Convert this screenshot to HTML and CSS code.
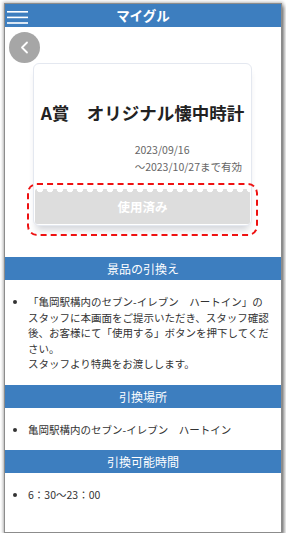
FILE: index.html
```html
<!DOCTYPE html>
<html lang="ja">
<head>
<meta charset="utf-8">
<title>マイグル</title>
<link rel="stylesheet" href="styles.css">
</head>
<body>
<div class="frame">
  <header class="topbar">
    <svg class="menu" width="22" height="17" viewBox="0 0 22 17" aria-hidden="true">
      <rect x="0" y="2" width="21" height="1.6" fill="#fff"/>
      <rect x="0" y="7.6" width="21" height="1.6" fill="#fff"/>
      <rect x="0" y="13.2" width="21" height="1.6" fill="#fff"/>
    </svg>
    <h1 class="title">マイグル</h1>
  </header>

  <div class="back-row">
    <div class="back">
      <svg width="31" height="31" viewBox="0 0 31 31" aria-hidden="true">
        <polyline points="18,10.5 13,15.5 18,20.5" fill="none" stroke="#fff" stroke-width="1.8" stroke-linecap="round" stroke-linejoin="round"/>
      </svg>
    </div>
  </div>

  <div class="card-wrap">
    <div class="card">
      <p class="prize">A賞　オリジナル懐中時計</p>
      <div class="dates-row">
        <div class="dates">2023/09/16<br>～2023/10/27まで有効</div>
      </div>
      <div class="used">使用済み</div>
    </div>
    <div class="highlight"></div>
  </div>

  <section class="sec sec-first">
    <h2 class="sec-head">景品の引換え</h2>
    <ul class="sec-list">
      <li>「亀岡駅構内のセブン-イレブン　ハートイン」のスタッフに本画面をご提示いただき、スタッフ確認後、お客様にて「使用する」ボタンを押下してください。<br>スタッフより特典をお渡しします。</li>
    </ul>
  </section>

  <section class="sec">
    <h2 class="sec-head">引換場所</h2>
    <ul class="sec-list">
      <li>亀岡駅構内のセブン-イレブン　ハートイン</li>
    </ul>
  </section>

  <section class="sec">
    <h2 class="sec-head">引換可能時間</h2>
    <ul class="sec-list">
      <li>6：30～23：00</li>
    </ul>
  </section>
</div>
</body>
</html>
```

FILE: styles.css
```css
* { box-sizing: border-box; }

html, body {
  margin: 0;
  padding: 0;
  background: #ffffff;
}

body {
  font-family: "Noto Sans CJK JP", "Noto Sans", sans-serif;
  color: #333333;
}

.frame {
  margin: 3px 4px 0 4px;
  height: 530px;
  border: 1px solid #8c8c8c;
  background: #ffffff;
  box-shadow: 0 0 3px 1px rgba(0, 0, 0, 0.25), 2px 3px 4px rgba(0, 0, 0, 0.45);
  overflow: hidden;
}

.topbar {
  height: 23px;
  background: #3d7ebf;
  display: flex;
  align-items: center;
  justify-content: center;
  position: relative;
}

.menu {
  position: absolute;
  left: 2px;
  top: 5px;
}

.title {
  margin: 0;
  font-size: 13.5px;
  font-weight: 700;
  color: #ffffff;
  line-height: 23px;
}

.back-row {
  height: 36px;
  padding: 5px 0 0 4px;
}

.back {
  width: 31px;
  height: 31px;
  border-radius: 50%;
  background: #a6a6a6;
}

.back svg { display: block; }

.card-wrap {
  position: relative;
  margin: 0 29px 0 28px;
}

.card {
  border: 1px solid #e4e8f0;
  border-radius: 6px;
  padding: 36px 1px 1px;
  background: #ffffff;
  box-shadow: 0 7px 7px -3px rgba(60, 70, 90, 0.22);
}

.prize {
  margin: 0;
  text-align: center;
  font-size: 17.5px;
  font-weight: 700;
  line-height: 25px;
  color: #222222;
}

.dates-row {
  display: flex;
  justify-content: flex-end;
  padding-right: 8px;
  margin-top: 16px;
}

.dates {
  font-size: 10.5px;
  line-height: 17px;
  color: #666666;
}

.used {
  position: relative;
  margin-top: 14px;
  height: 35px;
  background: #dddddd;
  color: #ffffff;
  font-size: 12.5px;
  font-weight: 700;
  text-align: center;
  line-height: 36px;
  border-radius: 2px;
}

.used::before {
  content: "";
  position: absolute;
  left: 0;
  right: 0;
  top: 0;
  height: 4px;
  background-image: radial-gradient(circle at 5px 0, #ffffff 3px, rgba(255, 255, 255, 0) 3.6px);
  background-size: 10px 4px;
  background-repeat: repeat-x;
}

.highlight {
  position: absolute;
  left: -6px;
  right: -6px;
  top: 120px;
  height: 53px;
  border: 2px dashed #ee1111;
  border-radius: 10px;
  pointer-events: none;
}

.sec-first { margin-top: 31px; }

.sec-head {
  margin: 0;
  height: 23px;
  background: #3d7ebf;
  color: #ffffff;
  font-size: 12px;
  font-weight: 400;
  line-height: 23px;
  text-align: center;
}

.sec-list {
  margin: 0;
  padding: 14px 10px 13px 23px;
  font-size: 10.5px;
  line-height: 15.5px;
  color: #333333;
}
```
